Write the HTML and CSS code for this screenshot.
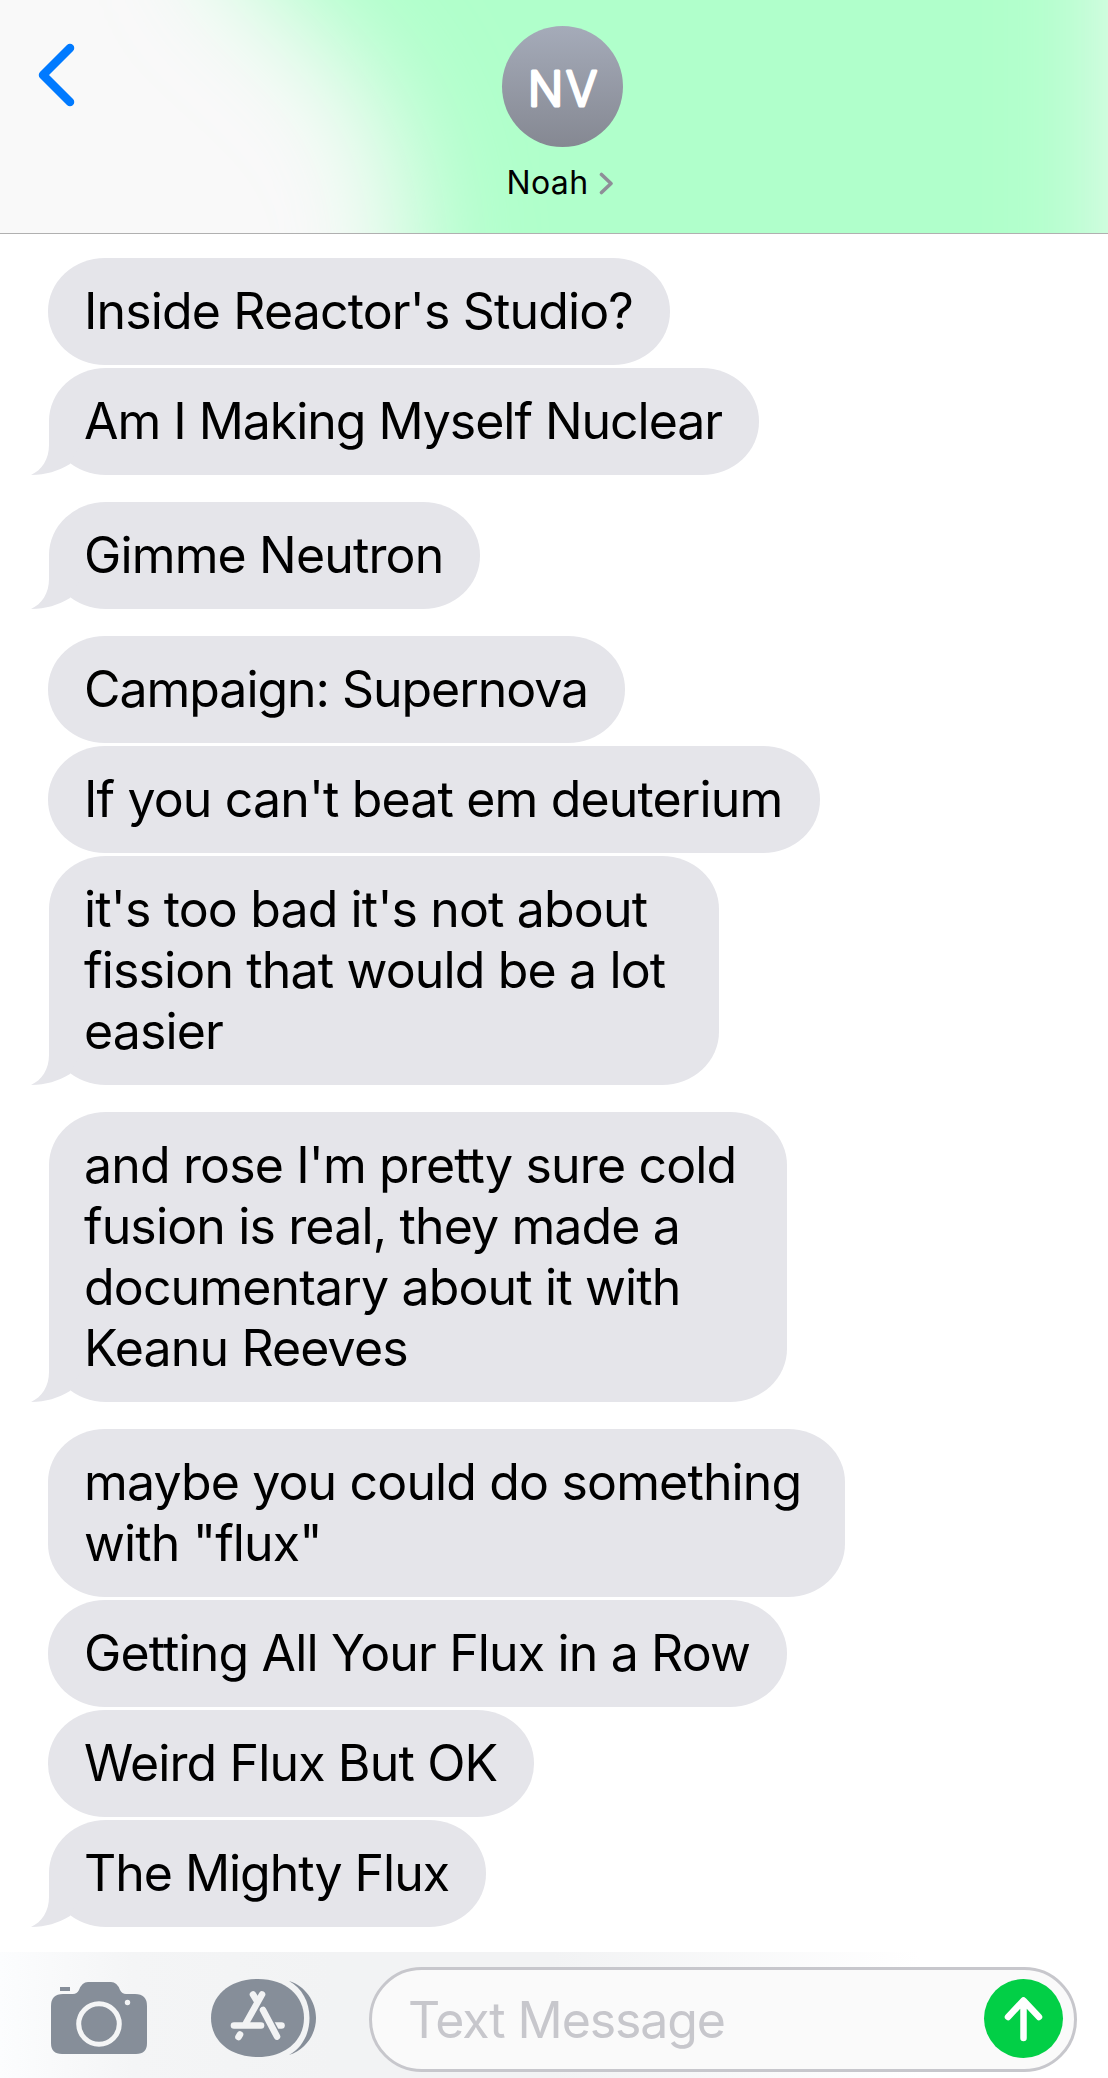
FILE: index.html
```html
<!DOCTYPE html>
<html lang="en">
<head>
    <meta charset="utf-8">
    <meta name="viewport" content="width=device-width, initial-scale=1.0">
    <title>Messages</title>
    <link rel="stylesheet" href="styles.css">
</head>

<body>
    <header class="header">
        <svg class="header-tint" viewBox="0 0 1108 233" preserveAspectRatio="none">
            <defs>
                <filter id="soft" x="-30%" y="-60%" width="160%" height="220%">
                    <feGaussianBlur stdDeviation="58"/>
                </filter>
            </defs>
            <path d="M220 -280 L220 -60 C290 30 408 60 412 240 L412 500 L1120 500 L1120 -280 Z" fill="#b0ffcb" filter="url(#soft)"/>
        </svg>
        <a class="back" href="#">
            <svg width="37" height="64" viewBox="0 0 37 64">
                <path d="M32 5 L5 32 L32 59" fill="none" stroke="#007aff" stroke-width="8.5" stroke-linecap="round" stroke-linejoin="round"/>
            </svg>
        </a>
        <div class="contact">
            <div class="avatar">
                <svg width="121" height="121" viewBox="0 0 121 121">
                    <text class="initials" x="62" y="80" text-anchor="middle" textLength="72" lengthAdjust="spacingAndGlyphs">NV</text>
                </svg>
            </div>
            <div class="contact-name">
                <span>Noah</span>
                <svg width="15" height="23" viewBox="0 0 15 23">
                    <path d="M2.5 2.5 L12 11.5 L2.5 20.5" fill="none" stroke="#8e8e98" stroke-width="3.6" stroke-linecap="round" stroke-linejoin="round"/>
                </svg>
            </div>
        </div>
    </header>

    <main class="messages">
        <div class="group">
            <p class="bubble">Inside Reactor's Studio?</p>
            <p class="bubble tail tight">Am I Making Myself Nuclear</p>
        </div>
        <div class="group">
            <p class="bubble tail">Gimme Neutron</p>
        </div>
        <div class="group">
            <p class="bubble tight">Campaign: Supernova</p>
            <p class="bubble">If you can't beat em deuterium</p>
            <p class="bubble tail narrow">it's too bad it's not about fission that would be a lot easier</p>
        </div>
        <div class="group">
            <p class="bubble tail medium">and rose I'm pretty sure cold fusion is real, they made a documentary about it with Keanu Reeves</p>
        </div>
        <div class="group">
            <p class="bubble wide">maybe you could do something with "flux"</p>
            <p class="bubble">Getting All Your Flux in a Row</p>
            <p class="bubble">Weird Flux But OK</p>
            <p class="bubble tail tight">The Mighty Flux</p>
        </div>
    </main>

    <footer class="toolbar">
        <svg class="camera" width="96" height="72" viewBox="0 0 96 72">
            <path fill="#868e99" d="M9 5 H19 V9 H9 V6 Z M12 12 H22 Q26 12 28 8 Q31 0 37 0 H60 Q66 0 69 8 Q71 12 75 12 H84 Q96 12 96 24 V61 Q96 72 85 72 H11 Q0 72 0 61 V24 Q0 12 12 12 Z"/>
            <circle cx="48" cy="42" r="20.3" fill="none" stroke="#f4f5f6" stroke-width="5"/>
            <circle cx="76.5" cy="20.5" r="2.7" fill="#f4f5f6"/>
        </svg>
        <svg class="apps" width="105" height="78" viewBox="0 0 105 78">
            <path fill="#868e99" d="M47 0 C75 0 93 17 93 39 C93 61 75 78 47 78 C18 78 0 61 0 39 C0 17 18 0 47 0 Z"/>
            <path fill="#868e99" d="M78 2 C94 7 105 22 105 39 C105 56 94 71 78 76 C91 69 98.5 55 98.5 39 C98.5 23 91 9 78 2 Z"/>
            <g fill="none" stroke="#f2f3f4" stroke-width="6.6" stroke-linecap="round">
                <path d="M63 46.5 H70.5"/>
                <path d="M23 46.5 H50"/>
                <path d="M52 31 L66 57" stroke="#868e99" stroke-width="9"/>
                <path d="M52 31 L66 57.5"/>
                <path d="M51 16 L39 37" stroke="#868e99" stroke-width="9.5"/>
                <path d="M51 15.5 L35 44"/>
                <path d="M42 15.5 L46 22"/>
                <path d="M29 55.5 L27.5 58"/>
            </g>
        </svg>
        <div class="input">
            <span class="placeholder">Text Message</span>
            <button class="send">
                <svg width="79" height="79" viewBox="0 0 79 79">
                    <path d="M39.5 22 V59 M24 38 L39.5 21.5 L55 38" fill="none" stroke="#fff" stroke-width="6.5" stroke-linecap="round" stroke-linejoin="round"/>
                </svg>
            </button>
        </div>
    </footer>
</body>

</html>
```
FILE: styles.css
```css
* {
    box-sizing: border-box;
}

body {
    margin: 0;
    width: 1108px;
    height: 2078px;
    overflow: hidden;
    display: flex;
    flex-direction: column;
    background: #fff;
    color: #000;
    font-family: Inter, "Liberation Sans", sans-serif;
}

/* header */
.header {
    position: relative;
    flex: none;
    height: 234px;
    background: #f9f9f9;
    border-bottom: 1px solid #b0b0b0;
    overflow: hidden;
}

.header-tint {
    position: absolute;
    left: 0;
    top: 0;
    width: 1108px;
    height: 233px;
}

.back {
    position: absolute;
    left: 38px;
    top: 43px;
}

.contact {
    position: relative;
    display: flex;
    flex-direction: column;
    align-items: center;
    width: 121px;
    margin: 26px 0 0 502px;
}

.avatar {
    width: 121px;
    height: 121px;
    border-radius: 50%;
    background: linear-gradient(#a5abb9, #858892);
}

.avatar svg {
    display: block;
}

.initials {
    fill: #fff;
    stroke: #fff;
    stroke-width: 3px;
    stroke-linejoin: round;
    font-size: 48px;
    font-weight: 300;
    letter-spacing: 3px;
}

.contact-name {
    display: flex;
    align-items: center;
    gap: 10px;
    margin: 16px 5px 0 0;
    font-size: 32px;
    line-height: 40px;
    letter-spacing: 0.4px;
    white-space: nowrap;
}

/* messages */
.messages {
    flex: none;
    height: 1718px;
    padding: 24px 0 0 48px;
    display: flex;
    flex-direction: column;
    gap: 27px;
}

.group {
    display: flex;
    flex-direction: column;
    align-items: flex-start;
    gap: 3px;
}

.bubble {
    position: relative;
    margin: 0;
    padding: 23px 37px 23px 36px;
    border-radius: 57px / 53px;
    background: #e5e5ea;
    font-size: 50px;
    line-height: 61px;
    letter-spacing: -0.85px;
}

.tight {
    letter-spacing: -1.04px;
}

.narrow {
    max-width: 670px;
}

.medium {
    max-width: 738px;
}

.wide {
    max-width: 797px;
}

.tail {
    margin-left: 1px;
    padding-left: 35px;
}

.tail::before {
    content: "";
    position: absolute;
    left: -21px;
    bottom: 0;
    width: 60px;
    height: 54px;
    background: #e5e5ea;
    clip-path: path("M21 0 V24 C21 38 14 49 3 54 C18 54 30 50 42 43 L54 20 V0 Z");
}

/* toolbar */
.toolbar {
    flex: 1;
    display: flex;
    align-items: flex-start;
    background: linear-gradient(90deg, #fcfdfe, #f4f5f6 12%, #f2f3f4 30%, #f2f3f4 50%, #fff 83%);
}

.camera {
    margin: 30px 0 0 51px;
}

.apps {
    margin: 27px 0 0 64px;
}

.input {
    display: flex;
    align-items: center;
    justify-content: space-between;
    width: 708px;
    height: 105px;
    margin: 15px 0 0 53px;
    padding: 0 11px 2px 36px;
    border: 3px solid #c7c7cc;
    border-radius: 53px;
    background: #fafafa;
}

.placeholder {
    padding-top: 2px;
    color: #c7c7cc;
    font-size: 50px;
    letter-spacing: -1.1px;
}

.send {
    width: 79px;
    height: 79px;
    padding: 0;
    border: 0;
    border-radius: 50%;
    background: #02cf46;
}
```
